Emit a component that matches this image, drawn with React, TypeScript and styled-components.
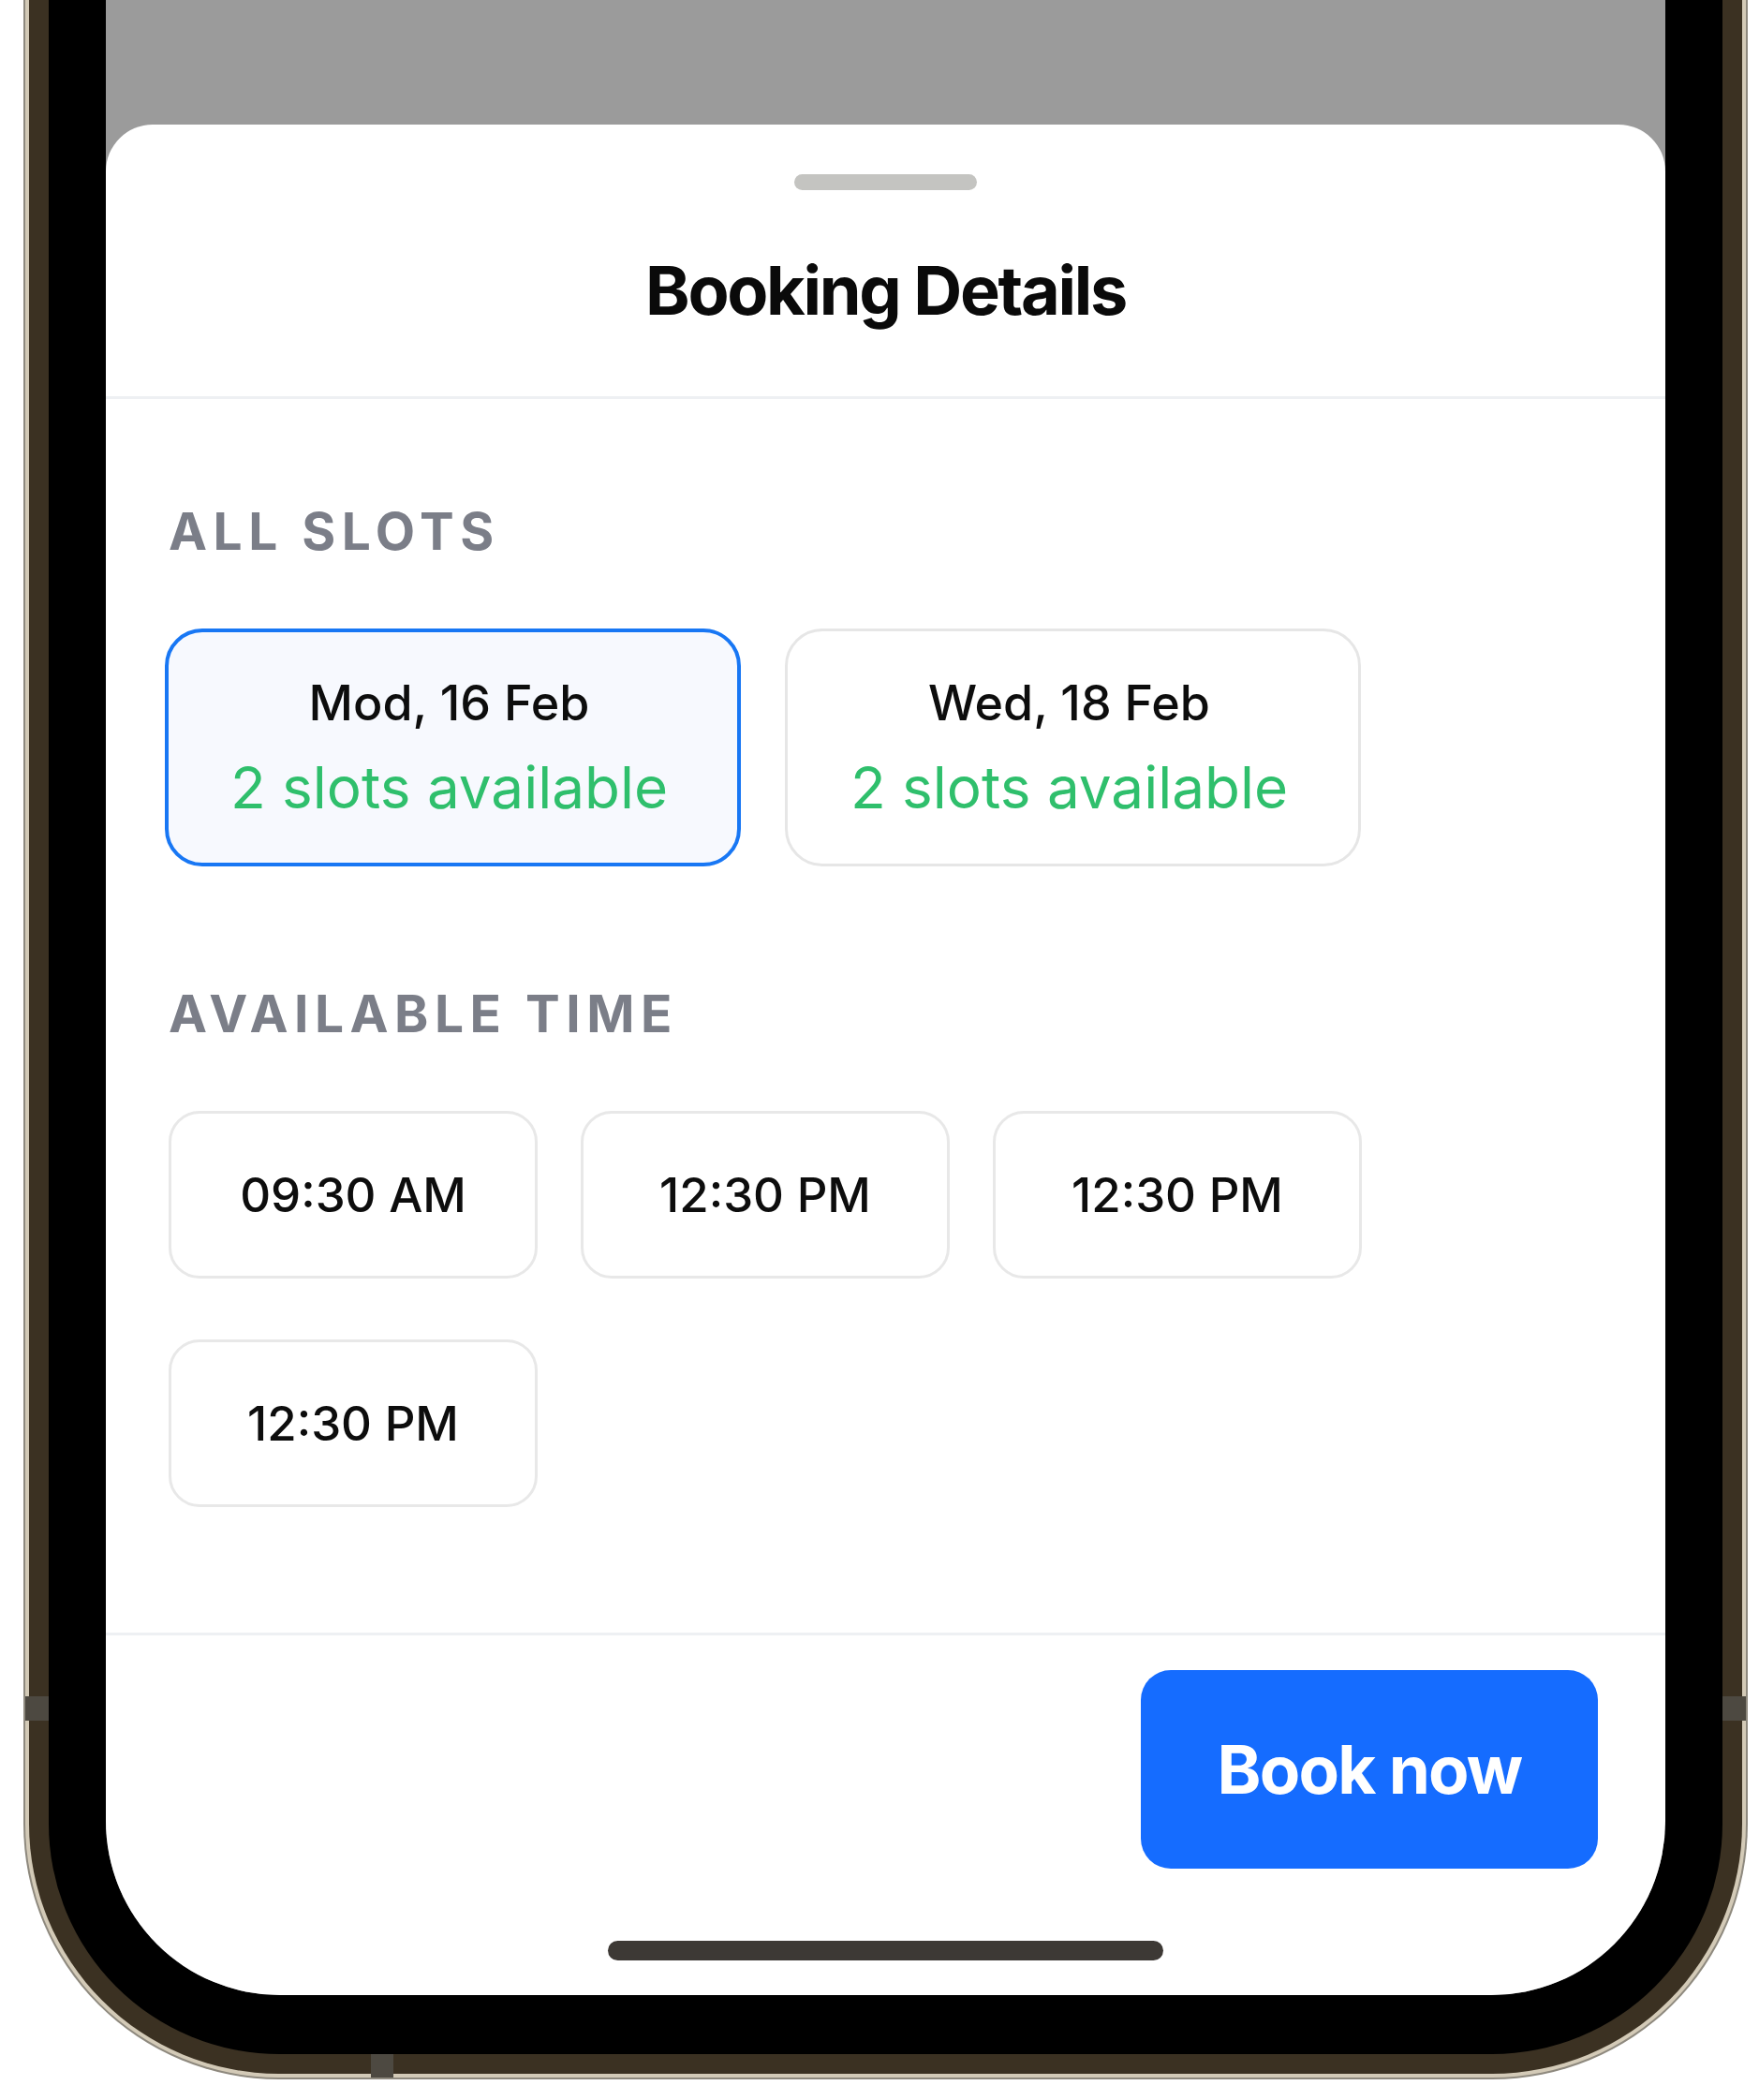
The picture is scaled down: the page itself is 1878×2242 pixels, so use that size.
import React, { useState } from 'react'
import styled, { createGlobalStyle } from 'styled-components'

const GlobalStyle = createGlobalStyle`
  html, body {
    margin: 0;
    padding: 0;
    background: #ffffff;
  }
  body {
    font-family: Inter, "Noto Sans", "Liberation Sans", sans-serif;
    -webkit-font-smoothing: antialiased;
  }
`

const Page = styled.div`
  width: 1878px;
  height: 2242px;
  background: #ffffff;
  padding-left: 25px;
  box-sizing: border-box;
  overflow: hidden;
`

// phone frame, drawn as nested bands
const FrameEdge = styled.div`
  position: relative;
  width: 1841px;
  background: #8e897e;
  padding: 0 2px 2px;
  box-sizing: border-box;
  border-radius: 0 0 273px 273px;
`

const FrameShine = styled.div`
  background: #d3cab7;
  padding: 0 4px 4px;
  border-radius: 0 0 271px 271px;
`

const FrameBand = styled.div`
  background: #3b3122;
  padding: 0 21px 21px;
  border-radius: 0 0 267px 267px;
`

const Bezel = styled.div`
  background: #000000;
  padding: 0 61px 63px;
  border-radius: 0 0 246px 246px;
`

const Antenna = styled.div<{ $side: 'left' | 'right' | 'bottom' }>`
  position: absolute;
  background: #4d4941;
  ${p => p.$side === 'left' && 'left: 2px; top: 1811px; width: 25px; height: 26px;'}
  ${p => p.$side === 'right' && 'right: 2px; top: 1811px; width: 25px; height: 26px;'}
  ${p => p.$side === 'bottom' && 'left: 371px; bottom: 2px; width: 24px; height: 25px;'}
`

const Screen = styled.div`
  height: 2130px;
  background: #9b9b9b;
  border-radius: 0 0 186px 186px;
  overflow: hidden;
  display: flex;
  flex-direction: column;
  padding-top: 133px;
  box-sizing: border-box;
`

const Sheet = styled.div`
  flex: 1;
  background: #ffffff;
  border-radius: 50px 50px 0 0;
  display: flex;
  flex-direction: column;
`

const Header = styled.div`
  display: flex;
  flex-direction: column;
  align-items: center;
  padding: 53px 0 77px;
  border-bottom: 3px solid #eef0f3;
`

const Handle = styled.div`
  width: 195px;
  height: 17px;
  border-radius: 9px;
  background: #c4c4c1;
  margin-bottom: 70px;
`

const Title = styled.h1`
  margin: 0;
  font-size: 72px;
  line-height: 73px;
  font-weight: 700;
  letter-spacing: -2.3px;
  color: #0a0a0a;
`

const Body = styled.div`
  flex: 1;
  padding: 114px 0 0 67px;
`

const SectionLabel = styled.div<{ $gapTop?: number }>`
  margin-top: ${p => p.$gapTop ?? 0}px;
  margin-bottom: 76px;
  font-size: 55px;
  line-height: 55px;
  font-weight: 700;
  letter-spacing: 6.5px;
  color: #7b7e88;
`

const DayGrid = styled.div`
  display: grid;
  grid-template-columns: repeat(2, 615px);
  column-gap: 47px;
  margin-left: -4px;
`

const DayCard = styled.button<{ $active: boolean }>`
  height: 254px;
  box-sizing: border-box;
  border-radius: 40px;
  border: ${p => (p.$active ? '4px solid #1877f4' : '3px solid #e6e6e6')};
  background: ${p => (p.$active ? '#f7f9fe' : '#ffffff')};
  display: flex;
  flex-direction: column;
  align-items: center;
  justify-content: center;
  gap: 33px;
  padding: 0 8px 0 0;
  font-family: inherit;
  cursor: pointer;
`

const DayName = styled.span`
  font-size: 52px;
  line-height: 52px;
  font-weight: 500;
  color: #0d0d0d;
`

const SlotCount = styled.span`
  font-size: 62px;
  line-height: 62px;
  font-weight: 400;
  color: #2fbf6c;
`

const TimeGrid = styled.div`
  display: grid;
  grid-template-columns: repeat(3, 394px);
  column-gap: 46px;
  row-gap: 65px;
`

const TimeChip = styled.button`
  height: 179px;
  box-sizing: border-box;
  border-radius: 33px;
  border: 3px solid #e8e8e8;
  background: #ffffff;
  font-family: inherit;
  font-size: 51px;
  font-weight: 500;
  color: #0d0d0d;
  padding: 0;
  cursor: pointer;
`

const Footer = styled.div`
  border-top: 3px solid #eef0f3;
  padding: 37px 72px 37px 0;
  display: flex;
  flex-direction: column;
  align-items: flex-end;
`

const BookButton = styled.button`
  width: 488px;
  height: 212px;
  border: none;
  border-radius: 32px;
  background: #156cff;
  color: #ffffff;
  font-family: inherit;
  font-size: 71px;
  font-weight: 700;
  letter-spacing: -1.8px;
  cursor: pointer;
`

const HomeIndicator = styled.div`
  align-self: center;
  margin: 77px 0 0 72px;
  width: 593px;
  height: 21px;
  border-radius: 11px;
  background: #3d3935;
`

const days = [
  { label: 'Mod, 16 Feb', slots: '2 slots available' },
  { label: 'Wed, 18 Feb', slots: '2 slots available' },
]

const times = ['09:30 AM', '12:30 PM', '12:30 PM', '12:30 PM']

export default function App() {
  const [day, setDay] = useState(0)

  return (
    <Page>
      <GlobalStyle />
      <FrameEdge>
        <FrameShine>
          <FrameBand>
            <Bezel>
              <Screen>
                <Sheet>
                  <Header>
                    <Handle />
                    <Title>Booking Details</Title>
                  </Header>
                  <Body>
                    <SectionLabel>ALL SLOTS</SectionLabel>
                    <DayGrid>
                      {days.map((d, i) => (
                        <DayCard key={i} $active={i === day} onClick={() => setDay(i)}>
                          <DayName>{d.label}</DayName>
                          <SlotCount>{d.slots}</SlotCount>
                        </DayCard>
                      ))}
                    </DayGrid>
                    <SectionLabel $gapTop={130}>AVAILABLE TIME</SectionLabel>
                    <TimeGrid>
                      {times.map((t, i) => (
                        <TimeChip key={i}>{t}</TimeChip>
                      ))}
                    </TimeGrid>
                  </Body>
                  <Footer>
                    <BookButton>Book now</BookButton>
                    <HomeIndicator />
                  </Footer>
                </Sheet>
              </Screen>
            </Bezel>
          </FrameBand>
        </FrameShine>
        <Antenna $side="left" />
        <Antenna $side="right" />
        <Antenna $side="bottom" />
      </FrameEdge>
    </Page>
  )
}
